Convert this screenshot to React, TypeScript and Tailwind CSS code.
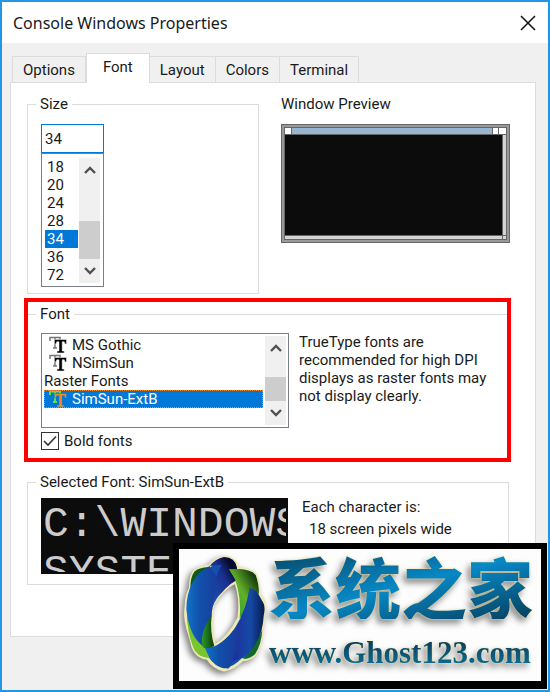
import { useState } from "react"

const tabs = ["Options", "Font", "Layout", "Colors", "Terminal"]
const sizes = ["18", "20", "24", "28", "34", "36", "72"]
const fonts = [
  { name: "MS Gothic", trueType: true },
  { name: "NSimSun", trueType: true },
  { name: "Raster Fonts", trueType: false },
  { name: "SimSun-ExtB", trueType: true },
]

function Chevron({ up }: { up?: boolean }) {
  return (
    <svg width="12" height="8" viewBox="0 0 12 8" fill="none" stroke="#505050" strokeWidth="2.4">
      <path d={up ? "M1 7L6 2L11 7" : "M1 1L6 6L11 1"} />
    </svg>
  )
}

function TrueTypeIcon({ selected }: { selected: boolean }) {
  return (
    <svg width="18" height="18" viewBox="0 0 18 18" className="shrink-0">
      <path
        d="M1 5V1.500H11V5M6 1.500V12M4 12H8"
        fill="none"
        stroke={selected ? "#5fe04a" : "#777"}
        strokeWidth={selected ? 2 : 1.500}
      />
      <path
        d="M5.500 3.500H17.500V8H16L15.200 5.800H13.200V15H15.200V17H8V15H10V5.800H7.800L7 8H5.500Z"
        fill={selected ? "#ef8a2c" : "#000"}
        stroke={selected ? "#0078d7" : "#fff"}
        strokeWidth="0.5"
      />
    </svg>
  )
}

function ScrollBar({ children }: { children: React.ReactNode }) {
  return (
    <div className="flex w-[21px] shrink-0 flex-col bg-[#f0f0f0]">
      <button type="button" aria-label="Scroll up" className="flex h-6 items-center justify-center">
        <Chevron up />
      </button>
      <div className="flex flex-1 flex-col justify-end">{children}</div>
      <button type="button" aria-label="Scroll down" className="flex h-6 items-center justify-center">
        <Chevron />
      </button>
    </div>
  )
}

function WindowPreview() {
  return (
    <div className="flex h-[119px] flex-col border border-[#666] bg-[#999] p-[2px]">
      <div className="flex flex-1 flex-col border border-[#666]">
        <div className="flex h-[7px] border-b border-[#666] bg-[#99b4d1]">
          <div className="w-[7px] border-r border-[#666] bg-white" />
          <div className="flex-1" />
          <div className="w-[7px] border-x border-[#666] bg-white" />
          <div className="w-[7px] bg-white" />
        </div>
        <div className="flex flex-1">
          <div className="flex-1 bg-[#0c0c0c]" />
          <div className="w-1 border-l border-[#666] bg-[#d4d4d4]" />
        </div>
        <div className="flex h-1 border-t border-[#666] bg-[#d4d4d4]">
          <div className="flex-1" />
          <div className="w-1 border-l border-[#666]" />
        </div>
      </div>
    </div>
  )
}

function RingLogo() {
  return (
    <svg width="90" height="125" viewBox="0 0 270 375" className="shrink-0 drop-shadow-[-3px_3px_3px_rgba(0,0,0,0.5)]">
      <defs>
        <linearGradient id="blue" x1="0" y1="0" x2="1" y2="0">
          <stop offset="0" stopColor="#1173c8" />
          <stop offset="0.4" stopColor="#1151ab" />
          <stop offset="1" stopColor="#1a3a9c" />
        </linearGradient>
        <linearGradient id="crown" x1="0" y1="1" x2="1" y2="0">
          <stop offset="0" stopColor="#1658b4" />
          <stop offset="0.55" stopColor="#1b2f92" />
          <stop offset="0.8" stopColor="#040b2c" />
        </linearGradient>
        <linearGradient id="right" x1="0" y1="0" x2="1" y2="0">
          <stop offset="0" stopColor="#20289a" />
          <stop offset="0.6" stopColor="#164aa6" />
          <stop offset="1" stopColor="#061a50" />
        </linearGradient>
        <linearGradient id="green" x1="0" y1="1" x2="1" y2="0">
          <stop offset="0" stopColor="#17a22b" />
          <stop offset="0.5" stopColor="#62b02a" />
          <stop offset="0.9" stopColor="#0a2c08" />
        </linearGradient>
        <linearGradient id="leaf" x1="0" y1="0" x2="1" y2="0">
          <stop offset="0" stopColor="#2f9a2a" />
          <stop offset="1" stopColor="#083a0b" />
        </linearGradient>
      </defs>
      <path
        fillRule="evenodd"
        d="M46 62Q58 50 92 45Q108 24 135 18Q168 18 174 50Q212 52 230 72Q240 98 240 128Q262 150 256 180Q256 205 250 230Q248 280 228 310Q214 324 190 326Q165 352 135 357Q104 350 86 322Q52 318 42 288Q36 262 26 232Q16 195 22 160Q22 135 34 112Q34 78 46 62ZM170 93Q130 112 102 160Q92 200 106 286Q150 262 180 200Q188 140 170 93Z"
        fill="#1151ab"
        stroke="#eee8b6"
        strokeWidth="9"
      />
      <path d="M34 112Q34 78 46 62Q58 50 90 48L60 75Z" fill="#0d5a1c" />
      <path d="M92 45Q60 60 40 95Q22 130 22 175L28 220Q44 262 66 290Q66 240 98 195Q98 165 112 145L120 90Z" fill="url(#blue)" />
      <path d="M92 45Q108 24 135 18Q168 18 174 50L172 88Q140 105 100 160Q112 125 110 95Q112 65 128 42Q108 42 92 45Z" fill="url(#crown)" />
      <path d="M150 55Q212 50 230 72Q240 98 240 130Q222 105 212 140L182 205Q188 140 168 85Z" fill="url(#green)" />
      <path d="M212 110Q236 115 246 146Q262 160 254 195Q252 240 232 278Q208 318 150 335Q178 285 172 230Q200 180 212 110Z" fill="url(#right)" />
      <path d="M24 190Q34 262 80 292L92 322Q52 318 42 288Q24 240 24 190Z" fill="#79c530" />
      <path d="M98 192Q92 240 106 286L74 292Q56 255 98 192Z" fill="url(#leaf)" />
      <path d="M78 292Q122 295 178 220Q182 290 150 352Q104 355 78 292Z" fill="url(#blue)" />
      <path d="M250 235Q248 280 228 310Q214 324 192 324Q230 290 250 235Z" fill="#14692a" />
    </svg>
  )
}

function SiteBadge() {
  return (
    <div className="absolute right-px bottom-px flex h-[146px] w-[374px] items-start border-[6px] border-b-8 border-black bg-[#fdfdfd] pt-[2px]">
      <RingLogo />
      <div className="flex flex-1 flex-col whitespace-nowrap">
        <p className="bg-linear-to-br from-[#064766] via-[#0788c6] to-[#053d5a] bg-clip-text font-['Noto_Sans_CJK_SC',sans-serif] text-[66px] leading-[68px] font-black text-transparent [filter:drop-shadow(0_0_1px_#eee8a0)_drop-shadow(-3px_4px_3px_rgba(0,0,0,0.45))]">
          系统之家
        </p>
        <p className="mt-4 bg-linear-to-b from-[#0b314b] to-[#087aa5] bg-clip-text font-['Liberation_Serif',serif] text-[31px] leading-9 font-bold text-transparent [filter:drop-shadow(0_0_1px_#eee8a0)_drop-shadow(-3px_4px_3px_rgba(0,0,0,0.45))]">
          www.Ghost123.com
        </p>
      </div>
    </div>
  )
}

function App() {
  const [size, setSize] = useState("34")
  const [font, setFont] = useState("SimSun-ExtB")
  const [bold, setBold] = useState(true)

  return (
    <main className="relative flex min-h-screen flex-col border-2 border-[#2196e8] bg-[#f0f0f0] font-['Roboto',sans-serif] text-[15px] leading-[18px] text-[#1a1a1a]">
      <header className="flex h-[41px] items-center justify-between bg-white pr-3 pl-[11px]">
        <h1 className="font-['Noto_Sans',sans-serif] text-base">Console Windows Properties</h1>
        <button type="button" aria-label="Close">
          <svg width="16" height="16" viewBox="0 0 16 16" stroke="#111" strokeWidth="1.500">
            <path d="M1 1L15 15M15 1L1 15" />
          </svg>
        </button>
      </header>

      <div role="tablist" className="flex items-end pt-[10px] pl-[10px]">
        {tabs.map((tab) => (
          <button
            key={tab}
            type="button"
            role="tab"
            aria-selected={tab === "Font"}
            className={
              tab === "Font"
                ? "z-10 -mb-px h-[30px] border border-b-0 border-[#dcdcdc] bg-white px-4 pb-1"
                : "h-[26px] border border-b-0 border-l-0 border-[#dcdcdc] px-[10px] first:border-l"
            }
          >
            {tab}
          </button>
        ))}
      </div>

      <section className="mr-3 mb-[53px] ml-2 flex flex-1 flex-col border border-[#dcdcdc] bg-white pt-3">
        <div className="mr-[25px] ml-4 flex justify-between gap-[22px]">
          <fieldset className="w-[232px] border border-[#dcdcdc] px-2 pb-[6px]">
            <legend className="px-1">Size</legend>
            <div className="w-[68px] pt-[11px] pl-[5px]">
              <input
                type="text"
                aria-label="Font size"
                value={size}
                onChange={(e) => setSize(e.target.value)}
                className="block h-[29px] w-full border border-[#0078d7] bg-white px-[3px] outline-none"
              />
              <div className="flex h-[134px] border border-[#7a7f87] px-[3px] pt-1 pb-[3px]">
                <ul role="listbox" aria-label="Sizes" className="mr-[1px] flex-1">
                  {sizes.map((s) => (
                    <li
                      key={s}
                      role="option"
                      aria-selected={s === size}
                      onClick={() => setSize(s)}
                      className={s === size ? "bg-[#0078d7] pl-[2px] text-white" : "pl-[2px]"}
                    >
                      {s}
                    </li>
                  ))}
                </ul>
                <ScrollBar>
                  <div className="h-[38px] bg-[#cdcdcd]" />
                </ScrollBar>
              </div>
            </div>
          </fieldset>
          <div className="flex-1">
            <h2 className="mb-[11px]">Window Preview</h2>
            <WindowPreview />
          </div>
        </div>

        <div className="mt-1 mr-6 ml-[13px] border-4 border-[#ff0000] pt-[3px] pb-2">
          <fieldset className="border-t border-[#dcdcdc] pl-2">
            <legend className="px-1">Font</legend>
            <div className="flex gap-[10px] pt-[10px] pl-[5px]">
              <div className="flex h-[95px] w-[248px] shrink-0 border border-[#7a7f87] p-[2px]">
                <ul role="listbox" aria-label="Fonts" className="mr-[2px] flex-1">
                  {fonts.map((f) => (
                    <li
                      key={f.name}
                      role="option"
                      aria-selected={f.name === font}
                      onClick={() => setFont(f.name)}
                      className={
                        f.name === font
                          ? "flex gap-[5px] bg-[#0078d7] text-white outline outline-dotted -outline-offset-1 outline-[#ef8a2c]"
                          : "flex gap-[5px]"
                      }
                    >
                      {f.trueType && (
                        <span className="pl-[5px]">
                          <TrueTypeIcon selected={f.name === font} />
                        </span>
                      )}
                      {f.name}
                    </li>
                  ))}
                </ul>
                <ScrollBar>
                  <div className="h-6 bg-[#cdcdcd]" />
                </ScrollBar>
              </div>
              <p>
                TrueType fonts are
                <br />
                recommended for high DPI
                <br />
                displays as raster fonts may
                <br />
                not display clearly.
              </p>
            </div>
            <label className="mt-1 ml-[5px] flex w-fit items-center gap-[5px]">
              <span className="grid">
                <input
                  type="checkbox"
                  checked={bold}
                  onChange={(e) => setBold(e.target.checked)}
                  className="peer col-start-1 row-start-1 size-[18px] appearance-none border border-[#333] bg-white"
                />
                <svg
                  viewBox="0 0 18 18"
                  className="pointer-events-none invisible col-start-1 row-start-1 size-[18px] peer-checked:visible"
                  fill="none"
                  stroke="#333"
                  strokeWidth="1.600"
                >
                  <path d="M3 9L7 13L15 4.500" />
                </svg>
              </span>
              Bold fonts
            </label>
          </fieldset>
        </div>

        <fieldset className="mt-[11px] mr-[26px] ml-4 border border-[#dcdcdc] px-2 pb-[10px]">
          <legend className="px-1">Selected Font: {font}</legend>
          <div className="flex gap-[14px] pt-[7px] pl-[5px]">
            <div className="h-[76px] w-[247px] shrink-0 overflow-hidden bg-[#0c0c0c] px-[2px] pt-[3px] font-['Liberation_Mono',monospace] text-[43px] leading-[48px] text-[#ccc]">
              <div className="h-[71px] overflow-hidden">
                C:\WINDOWS
                <br />
                SYSTEM
              </div>
            </div>
            <div className="whitespace-nowrap">
              <p className="mb-1">Each character is:</p>
              <p className="pl-[7px]">18 screen pixels wide</p>
            </div>
          </div>
        </fieldset>
      </section>

      <SiteBadge />
    </main>
  )
}

export default App
